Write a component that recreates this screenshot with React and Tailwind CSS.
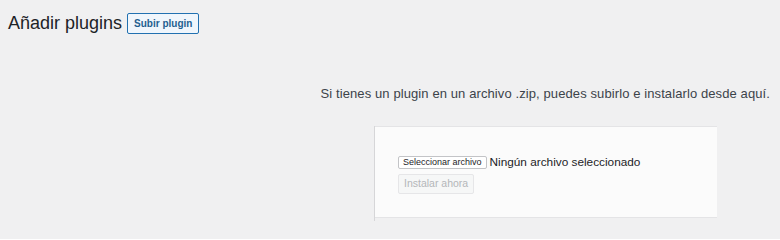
export default function App() {
  return (
    <div className="min-h-[239px] w-[780px] bg-[#f0f0f1] font-['Liberation_Sans',Arial,sans-serif] text-[#1d2327]">
      <div className="flex items-center pl-2 pt-[13px]">
        <h1 className="text-[18px] leading-[21px]">Añadir plugins</h1>
        <button className="ml-[5px] h-[21px] rounded-[2px] border border-[#2271b1] bg-[#f0f6fc] px-[6px] text-[10px] font-bold text-[#1f5f8f]">
          Subir plugin
        </button>
      </div>

      <p className="mt-[52px] pr-[10px] text-right text-[13px] leading-4 tracking-[0.1px] text-[#3c434a]">
        Si tienes un plugin en un archivo .zip, puedes subirlo e instalarlo desde aquí.
      </p>

      <div className="ml-[374px] mt-[24px] flex w-[343px]">
        <div className="h-[95px] w-px bg-[#d6d6d8]" />
        <div className="h-[92px] flex-1 border-y border-[#e4e4e6] bg-[#fbfbfb] pl-[23px] pt-[29px]">
          <div className="flex items-center gap-[3px]">
            <button className="h-[13px] rounded-[2px] border border-[#c3c4c7] bg-white px-[4px] text-[9px] leading-[11px] text-[#1d2327]">
              Seleccionar archivo
            </button>
            <span className="text-[11.8px] leading-[13px] text-[#1d2327]">Ningún archivo seleccionado</span>
          </div>
          <button className="mt-[5px] h-[20px] rounded-[2px] border border-[#e6e6e8] bg-[#f6f7f7] px-[5px] text-[10.5px] text-[#b4b6b9]">
            Instalar ahora
          </button>
        </div>
      </div>
    </div>
  );
}
